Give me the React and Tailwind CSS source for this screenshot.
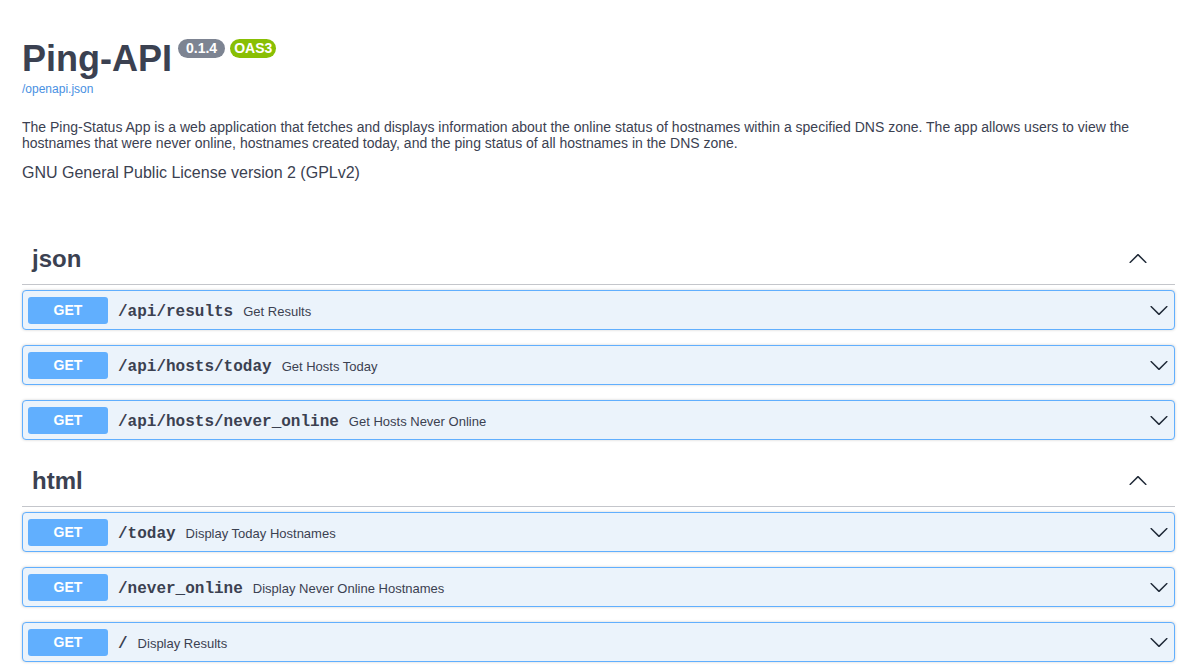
const sections = [
  {
    name: 'json',
    ops: [
      { path: '/api/results', summary: 'Get Results' },
      { path: '/api/hosts/today', summary: 'Get Hosts Today' },
      { path: '/api/hosts/never_online', summary: 'Get Hosts Never Online' },
    ],
  },
  {
    name: 'html',
    ops: [
      { path: '/today', summary: 'Display Today Hostnames' },
      { path: '/never_online', summary: 'Display Never Online Hostnames' },
      { path: '/', summary: 'Display Results' },
    ],
  },
]

function Arrow({ up }) {
  return (
    <svg width="20" height="20" viewBox="0 0 20 20" className={up ? 'rotate-180' : ''} fill="#1f2937">
      <path d="M17.418 6.109c.272-.268.709-.268.979 0s.271.701 0 .969l-7.908 7.83c-.27.268-.707.268-.979 0l-7.908-7.83c-.27-.268-.27-.701 0-.969.271-.268.709-.268.98 0L10 13.25l7.418-7.141z" />
    </svg>
  )
}

function Operation({ op }) {
  return (
    <div className="mb-[15px] rounded-[4px] border border-[#61affe] bg-[#ebf3fb] shadow-[0_0_3px_rgba(0,0,0,0.19)]">
      <div className="flex h-[38px] items-center px-[5px]">
        <span className="w-[80px] rounded-[3px] bg-[#61affe] py-[5px] text-center text-[14px] font-bold leading-[17px] text-white">
          GET
        </span>
        <div className="flex flex-1 items-baseline pt-[3px]">
          <span className="px-[10px] font-['Liberation_Mono',monospace] text-[16px] font-bold leading-[18px] text-[#3b4151]">
            {op.path}
          </span>
          <span className="text-[13px] leading-[15px] text-[#3b4151]">{op.summary}</span>
        </div>
        <Arrow />
      </div>
    </div>
  )
}

export default function App() {
  return (
    <div className="min-h-[671px] bg-white pl-[22px] pr-[8px] font-['Liberation_Sans',Arial,sans-serif] text-[#3b4151]">
      {/* Info */}
      <div className="pt-[38px] pb-[53px]">
        <div className="flex items-start">
          <h2 className="text-[36px] font-bold leading-[41px] text-[#3b4151]">Ping-API</h2>
          <span className="ml-[6px] mt-[1px] rounded-full bg-[#7d8492] px-[8px] text-[14px] font-bold leading-[19px] text-white">
            0.1.4
          </span>
          <span className="ml-[5px] mt-[1px] rounded-full bg-[#89bf04] px-[4px] text-[14px] font-bold leading-[19px] text-white">
            OAS3
          </span>
        </div>
        <a className="mt-[3px] block text-[12px] leading-[14px] text-[#4990e2]">/openapi.json</a>
        <p className="mt-[23px] pr-[30px] text-[14px] leading-[16px]">
          The Ping-Status App is a web application that fetches and displays information about the online status of hostnames within a specified DNS zone. The app allows users to view the hostnames that were never online, hostnames created today, and the ping status of all hostnames in the DNS zone.
        </p>
        <div className="mt-[13px] text-[16px] leading-[18px]">GNU General Public License version 2 (GPLv2)</div>
      </div>

      {sections.map(section => (
        <div key={section.name} className="mb-[2px] flex flex-col">
          <div className="mb-[5px] flex items-center border-b border-[#c4c6cb] pt-[10px] pb-[11px] pl-[10px] pr-[27px]">
            <h3 className="flex-1 text-[24px] font-bold leading-[28px]">{section.name}</h3>
            <Arrow up />
          </div>
          {section.ops.map(op => (
            <Operation key={op.path} op={op} />
          ))}
        </div>
      ))}
    </div>
  )
}
